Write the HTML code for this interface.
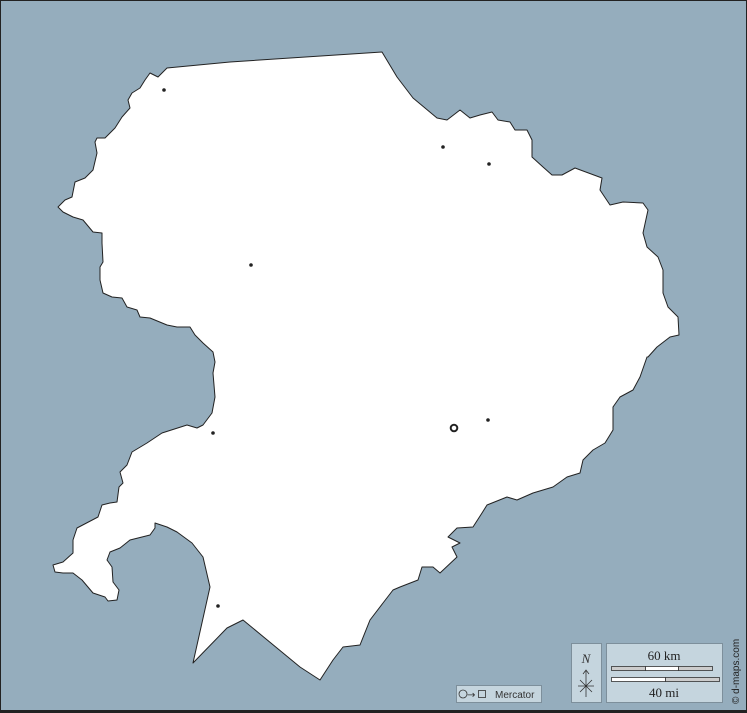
<!DOCTYPE html>
<html><head><style>
html,body{margin:0;padding:0;background:#95adbd;}
svg{display:block}
</style></head><body>
<svg width="747" height="713" viewBox="0 0 747 713" xmlns="http://www.w3.org/2000/svg">
<rect x="0" y="0" width="747" height="713" fill="#95adbd"/>
<polygon fill="#fff" stroke="#222" stroke-width="1" stroke-linejoin="round" points="
167,68 230,62 382,52 397,77 413,98 437,118 447,120 460,110 470,118 480,115 492,112 498,120 510,122 515,130 527,130 532,140 532,157 543,167 552,175 562,175 575,168 602,178 600,190 610,205 623,202 643,203 648,210 643,233 647,247 658,257 663,270 663,293 668,307 678,317 679,335 670,337 657,347 648,357
647,357 640,377 633,390 620,397 613,407 613,430 605,443 593,450 583,460 580,473 567,477 553,487 533,493 517,500 507,497 487,505 482,513 473,527 457,528 448,537 460,543 452,547 457,557 440,573 433,567 422,567 418,580 400,587 393,590 383,603 370,620 360,645 343,647 333,660 320,680 300,667
243,620 227,628 193,663 210,587 203,557 192,543 177,532 167,527 155,523 155,528 150,535 130,540 120,548 110,552 107,560 112,567 113,582 119,590 117,600 108,601 105,597 93,593 82,580 73,573 63,573 55,572 53,565 63,562 73,553 73,540 77,528 98,517 102,505 110,503 117,502 119,487 123,483 120,472 127,465 132,452 147,443 162,433 187,425 197,428 203,425 212,413
215,397 213,373 215,362 213,352 203,343 195,335 190,327 177,327 167,325 150,318 140,317 137,310 127,307 122,298 112,297 103,293 100,280 100,267 103,262 102,243 102,233 93,232 83,220 73,217 63,212 58,207 65,200 72,197 75,182 85,178 93,170 97,153 95,142 97,138 105,138 108,135 115,128 122,117 130,108 128,100 132,93 140,88 145,80 150,73 158,77 163,72"/>
<g fill="#222">
<circle cx="164" cy="90" r="1.8"/><circle cx="443" cy="147" r="1.8"/><circle cx="489" cy="164" r="1.8"/>
<circle cx="251" cy="265" r="1.8"/><circle cx="213" cy="433" r="1.8"/><circle cx="488" cy="420" r="1.8"/>
<circle cx="218" cy="606" r="1.8"/>
</g>
<circle cx="454" cy="428" r="3.3" fill="none" stroke="#222" stroke-width="2"/>
<rect x="456.5" y="685.5" width="85" height="17" fill="#c5d5de" stroke="#7d8f9b"/>
<circle cx="463" cy="694" r="4" fill="none" stroke="#333" stroke-width="0.8"/>
<text x="467" y="698" font-family="DejaVu Sans, sans-serif" font-size="10" fill="#333">→</text>
<rect x="478.5" y="690.5" width="7" height="7" fill="none" stroke="#333" stroke-width="0.8"/>
<text x="495" y="698" font-family="Liberation Sans, sans-serif" font-size="10" fill="#333">Mercator</text>
<rect x="571.5" y="643.5" width="30" height="59" fill="#c5d5de" stroke="#7d8f9b"/>
<text x="586" y="663" text-anchor="middle" font-family="Liberation Serif, serif" font-style="italic" font-size="13" fill="#333">N</text>
<g stroke="#333" stroke-width="0.8" fill="none">
<path d="M586 671 V697 M583 674 L586 670 L589 674 M578 686 H594 M580 680 L592 692 M592 680 L580 692"/>
</g>
<rect x="606.5" y="643.5" width="116" height="59" fill="#c5d5de" stroke="#7d8f9b"/>
<text x="664" y="660" text-anchor="middle" font-family="Liberation Serif, serif" font-size="13" fill="#222">60 km</text>
<rect x="611.5" y="666.5" width="34" height="4" fill="#ccc" stroke="#333" stroke-width="0.8"/>
<rect x="645.5" y="666.5" width="33" height="4" fill="#fff" stroke="#333" stroke-width="0.8"/>
<rect x="678.5" y="666.5" width="34" height="4" fill="#ccc" stroke="#333" stroke-width="0.8"/>
<rect x="611.5" y="677.5" width="54" height="4" fill="#fff" stroke="#333" stroke-width="0.8"/>
<rect x="665.5" y="677.5" width="54" height="4" fill="#ccc" stroke="#333" stroke-width="0.8"/>
<text x="664" y="697" text-anchor="middle" font-family="Liberation Serif, serif" font-size="13" fill="#222">40 mi</text>
<text transform="translate(739,704) rotate(-90)" font-family="Liberation Sans, sans-serif" font-size="10" fill="#222">© d-maps.com</text>
<rect x="0.5" y="0.5" width="746" height="711" fill="none" stroke="#222" stroke-width="1"/>
<rect x="0" y="710" width="747" height="3" fill="#222"/>
</svg>
</body></html>
